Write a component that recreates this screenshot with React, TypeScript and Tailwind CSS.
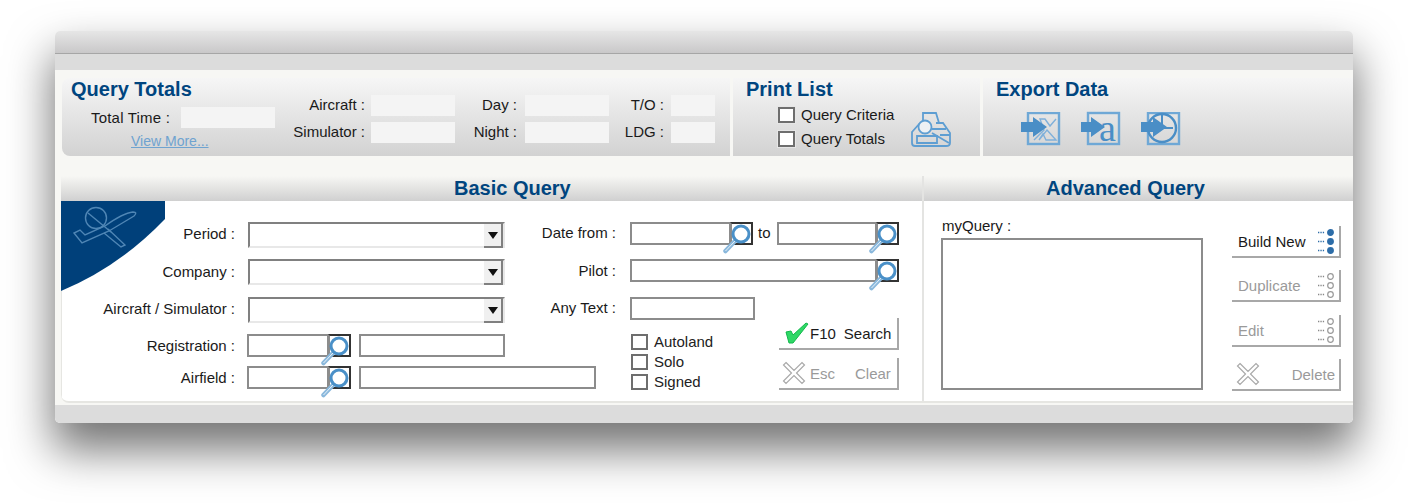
const Heading = ({ children }: { children: React.ReactNode }) => (
  <h2 className="text-[20px] leading-[22px] font-bold text-[#00457f]">{children}</h2>
);

const StatBox = () => <div className="h-[21px] bg-[#f4f4f4]" />;

const StatLabel = ({ text, pad }: { text: string; pad: string }) => (
  <span className={`h-[21px] text-right leading-[19px] whitespace-nowrap ${pad}`}>{text}</span>
);

const Check = ({ label, light }: { label: string; light?: boolean }) => (
  <label className="flex items-center gap-[6px] h-[16px] whitespace-nowrap">
    <input
      type="checkbox"
      className={`appearance-none w-[17px] h-[16px] bg-white border-2 border-[#6e6e6e] ${light ? "" : "outline-1 outline-[#e6e6e6]"}`}
    />
    <span className={light ? "text-[#222]" : ""}>{label}</span>
  </label>
);

const LookupIcon = () => (
  <svg className="absolute -left-[9px] top-0 pointer-events-none" width="30" height="30" viewBox="0 0 30 30" fill="none">
    <path d="M12 17 L2.5 27" stroke="#8ab8dc" strokeWidth="4.5" strokeLinecap="round" />
    <path d="M12 17 L2.5 27" stroke="#e8f2fa" strokeWidth="1" />
    <circle cx="18" cy="10" r="8" fill="#fff" stroke="#4a90c8" strokeWidth="3" />
  </svg>
);

const LookupInput = ({ width }: { width: string }) => (
  <div className={`relative flex h-[23px] ${width}`}>
    <input className="flex-1 min-w-0 border-2 border-[#8c8c8c] bg-white" />
    <div className="relative w-[23px] shrink-0 -ml-[1px] border-2 border-[#8c8c8c] border-r-[#333] border-t-[#333] border-b-[#333] bg-white">
      <LookupIcon />
    </div>
  </div>
);

const SelectBox = () => (
  <div className="relative w-[257px] h-[26px]">
    <select className="appearance-none block w-full h-full bg-white border-2 border-t-[#808080] border-l-[#808080] border-r-[#e8e8e8] border-b-[#e8e8e8]" />
    <div className="absolute right-[2px] top-[2px] bottom-[0px] w-[19px] flex items-center justify-center bg-[#f0f0f0] border-r-2 border-b-2 border-[#808080]">
      <svg width="10" height="7" viewBox="0 0 10 7">
        <path d="M0 0H10L5 7Z" fill="#111" />
      </svg>
    </div>
  </div>
);

const CrossIcon = () => (
  <svg width="24" height="24" viewBox="0 0 24 24" fill="#fff" stroke="#a9a9a9" strokeWidth="1.2">
    <path d="M4 1.5 L12 9.5 L20 1.5 L22.5 4 L14.5 12 L22.5 20 L20 22.5 L12 14.5 L4 22.5 L1.5 20 L9.5 12 L1.5 4 Z" />
  </svg>
);

const DotsIcon = ({ active }: { active?: boolean }) => (
  <svg width="17" height="25" viewBox="0 0 17 25">
    {[3.5, 12.5, 21.5].map((y) => (
      <g key={y}>
        <path d={`M0 ${y}h1.3M2.4 ${y}h1.3M4.8 ${y}h1.3`} stroke={active ? "#2d6da8" : "#888"} strokeWidth="1.4" />
        <circle
          cx="12.5"
          cy={y}
          r="2.8"
          fill={active ? "#2d6da8" : "#fff"}
          stroke={active ? "#2d6da8" : "#999"}
          strokeWidth="1.2"
        />
      </g>
    ))}
  </svg>
);

const ActionButton = ({ children, mt }: { children: React.ReactNode; mt: string }) => (
  <button className={`flex items-center justify-between w-[109px] h-[32px] pl-[6px] pr-[4px] bg-white border-r-2 border-b-2 border-[#a8a8a8] ${mt}`}>
    {children}
  </button>
);

const ExportArrow = ({ shift }: { shift?: number }) => (
  <path d={`M0 10 H${12 + (shift ?? 0)} V5 L${26 + (shift ?? 0)} 15 L${12 + (shift ?? 0)} 25 V20 H0 Z`} fill="#4a8ec6" />
);

const ExportExcel = () => (
  <svg width="40" height="34" viewBox="0 0 40 34" fill="none">
    <rect x="7" y="1" width="31" height="31" stroke="#6fa8d6" strokeWidth="2.4" />
    <path d="M13 28 L23 18 L19 7 H24 L29 14 L35 7 M26 18 L35 28 H25 L22 22 L18 28 Z" stroke="#7fb0da" strokeWidth="1.4" />
    <ExportArrow />
  </svg>
);

const ExportWord = () => (
  <svg width="40" height="34" viewBox="0 0 40 34" fill="none" className="overflow-visible">
    <rect x="7" y="1" width="31" height="31" stroke="#6fa8d6" strokeWidth="2.4" />
    <text x="18" y="29" fontFamily="Liberation Serif, serif" fontSize="38" fill="#4a8ec6">a</text>
    <ExportArrow shift={-2} />
  </svg>
);

const ExportClock = () => (
  <svg width="40" height="34" viewBox="0 0 40 34" fill="none">
    <rect x="7" y="1" width="31" height="31" stroke="#6fa8d6" strokeWidth="2.4" />
    <circle cx="21" cy="16" r="14" stroke="#4a8ec6" strokeWidth="2.4" />
    <path d="M21 2 V16 H32" stroke="#4a8ec6" strokeWidth="2" />
    <ExportArrow />
  </svg>
);

const PrinterIcon = () => (
  <svg width="42" height="38" viewBox="0 0 42 38" fill="none" stroke="#5e9ed2" strokeWidth="1.8">
    <path d="M13 11 V3 H26 L29 13" />
    <path d="M10 13 L2 22 V33 Q2 36 5 36 H36 Q40 36 40 33 V23 L33 13 H26" />
    <circle cx="15" cy="17" r="6.5" fill="#eef1f4" />
    <path d="M7 26 H27 V33 H7 Z" />
    <path d="M22 19 H36 M22 23 L39 33 M30 25 L40 25" />
  </svg>
);

export default function App() {
  return (
    <div className="w-[1408px] h-[503px] overflow-hidden bg-white pt-[31px] pl-[55px] font-['Liberation_Sans',sans-serif] text-[15px] leading-[18px] text-[#1a1a1a]">
      <div className="flex flex-col w-[1298px] h-[392px] rounded-[5px] overflow-hidden shadow-[0_25px_45px_2px_rgba(0,0,0,0.55)]">
        <div className="h-[23px] shrink-0 bg-linear-to-b from-[#e6e6e6] to-[#c9c8c9] border-b border-[#a6a6a6]" />
        <div className="h-[16px] shrink-0 bg-[#dcdcdc]" />

        <div className="h-[335px] shrink-0 bg-[#f7f7f4] pl-[6px] pt-[8px]">
          {/* totals strip */}
          <div className="flex ml-[1px] h-[78px] gap-[3px]">
            <div className="flex w-[668px] rounded-l-[8px] bg-linear-to-b from-[#f6f6f6] to-[#d2d2d2] pl-[9px]">
              <div className="w-[209px]">
                <Heading>Query Totals</Heading>
                <div className="flex mt-[7px]">
                  <span className="ml-[20px] w-[90px] leading-[21px] whitespace-nowrap tracking-[0.2px]">Total Time :</span>
                  <div className="w-[94px] h-[21px] bg-[#f4f4f4]" />
                </div>
                <a className="block mt-[5px] ml-[60px] text-[14px] leading-[16px] text-[#6fa3d0] underline whitespace-nowrap">View More...</a>
              </div>
              <div className="grid grid-cols-[91px_84px_70px_84px_62px_44px] gap-y-[6px] h-fit pt-[17px]">
                <StatLabel text="Aircraft :" pad="pr-[6px]" />
                <StatBox />
                <StatLabel text="Day :" pad="pr-[8px]" />
                <StatBox />
                <StatLabel text="T/O :" pad="pr-[7px]" />
                <StatBox />
                <StatLabel text="Simulator :" pad="pr-[6px]" />
                <StatBox />
                <StatLabel text="Night :" pad="pr-[8px]" />
                <StatBox />
                <StatLabel text="LDG :" pad="pr-[7px]" />
                <StatBox />
              </div>
            </div>

            <div className="w-[247px] bg-linear-to-b from-[#f6f6f6] to-[#d2d2d2] pl-[13px]">
              <Heading>Print List</Heading>
              <div className="flex">
                <div className="flex flex-col gap-[8px] ml-[32px] mt-[7px]">
                  <Check label="Query Criteria" />
                  <Check label="Query Totals" />
                </div>
                <div className="ml-[16px] mt-[10px]">
                  <PrinterIcon />
                </div>
              </div>
            </div>

            <div className="flex-1 bg-linear-to-b from-[#f6f6f6] to-[#d2d2d2] pl-[13px]">
              <Heading>Export Data</Heading>
              <div className="flex gap-[20px] ml-[25px] mt-[12px]">
                <ExportExcel />
                <ExportWord />
                <ExportClock />
              </div>
            </div>
          </div>

          {/* query panel */}
          <div className="flex mt-[20px] h-[227px] rounded-bl-[8px] border-b-2 border-[#e6e6e2] overflow-hidden">
            <section className="relative w-[861px] shrink-0 flex flex-col">
              <div className="h-[25px] shrink-0 pl-[393px] bg-linear-to-b from-[#f7f7f4] to-[#d0d0d0] text-[20px] leading-[24px] font-bold text-[#00457f]">
                Basic Query
              </div>
              <div className="relative flex-1 bg-white pt-[21px] shadow-[inset_1px_0_0_#e6e6e2]">
                <svg className="absolute left-0 top-0" width="104" height="91" viewBox="0 0 104 91" fill="none">
                  <path d="M0 0H104V18Q58 66 0 90Z" fill="#00407a" />
                  <g stroke="#4f86b5" strokeWidth="1.4">
                    <circle cx="35" cy="17" r="10.5" />
                    <path d="M27 12 L50 31" />
                    <path d="M13 32 L21 42 L48 30 L73 15 Q77 11 72 11 Q62 12 44 25 L24 34 L19 29 Z" />
                    <path d="M47 28 L64 44 L60 46 L43 32" />
                  </g>
                </svg>

                <div className="relative flex flex-col">
                  <div className="flex items-start h-[37px]">
                    <span className="w-[174px] text-right leading-[24px]">Period :</span>
                    <div className="ml-[13px]"><SelectBox /></div>
                    <span className="w-[111px] text-right leading-[22px]">Date from :</span>
                    <div className="ml-[14px]"><LookupInput width="w-[123px]" /></div>
                    <span className="ml-[5px] w-[19px] leading-[22px]">to</span>
                    <LookupInput width="w-[122px]" />
                  </div>
                  <div className="flex items-start h-[38px]">
                    <span className="w-[174px] text-right leading-[26px]">Company :</span>
                    <div className="ml-[13px]"><SelectBox /></div>
                    <span className="w-[111px] text-right leading-[24px]">Pilot :</span>
                    <div className="ml-[14px]"><LookupInput width="w-[269px]" /></div>
                  </div>
                  <div className="flex items-start h-[37px]">
                    <span className="w-[174px] text-right leading-[24px] whitespace-nowrap">Aircraft / Simulator :</span>
                    <div className="ml-[13px]"><SelectBox /></div>
                    <span className="w-[111px] text-right leading-[22px]">Any Text :</span>
                    <input className="ml-[14px] w-[125px] h-[23px] border-2 border-[#8c8c8c] bg-white" />
                  </div>
                </div>

                <div className="flex">
                  <div className="flex flex-col gap-[9px] w-[535px]">
                    <div className="flex items-start">
                      <span className="w-[174px] text-right leading-[23px]">Registration :</span>
                      <div className="ml-[12px]"><LookupInput width="w-[104px]" /></div>
                      <input className="ml-[8px] w-[146px] h-[23px] border-2 border-[#8c8c8c] bg-white" />
                    </div>
                    <div className="flex items-start">
                      <span className="w-[174px] text-right leading-[23px]">Airfield :</span>
                      <div className="ml-[12px]"><LookupInput width="w-[104px]" /></div>
                      <input className="ml-[8px] w-[237px] h-[23px] border-2 border-[#8c8c8c] bg-white" />
                    </div>
                  </div>
                  <div className="flex flex-col gap-[4px] ml-[35px] w-[148px]">
                    <Check label="Autoland" light />
                    <Check label="Solo" light />
                    <Check label="Signed" light />
                  </div>
                  <div className="flex flex-col gap-[8px] -mt-[16px] relative">
                    <button className="flex items-center w-[120px] h-[32px] pl-[5px] border-r-2 border-b-2 border-[#a8a8a8] bg-white whitespace-nowrap">
                      <svg width="25" height="22" viewBox="0 0 25 22">
                        <path d="M2 10 L7 9 L9 13 L22 1 L24 2 L9 21 L5 21 Z" fill="#2fd866" stroke="#12b84c" strokeWidth="1" />
                      </svg>
                      <span className="ml-[1px] mt-[2px]">F10</span>
                      <span className="ml-[8px] mt-[2px]">Search</span>
                    </button>
                    <button className="flex items-center w-[120px] h-[32px] pl-[3px] border-r-2 border-b-2 border-[#a8a8a8] bg-white text-[#9a9a9a] whitespace-nowrap">
                      <CrossIcon />
                      <span className="ml-[4px] mt-[2px]">Esc</span>
                      <span className="ml-[20px] mt-[2px]">Clear</span>
                    </button>
                  </div>
                </div>
              </div>
            </section>

            <section className="flex-1 flex flex-col border-l-2 border-[#e4e4e2]">
              <div className="h-[25px] shrink-0 pl-[122px] bg-linear-to-b from-[#f7f7f4] to-[#d0d0d0] text-[20px] leading-[24px] font-bold text-[#00457f]">
                Advanced Query
              </div>
              <div className="flex flex-1 bg-white pl-[17px]">
                <div className="w-[262px] pt-[16px]">
                  <div className="leading-[18px] ml-[1px]">myQuery :</div>
                  <textarea className="block mt-[3px] w-[262px] h-[152px] resize-none border-2 border-[#8c8c8c] bg-white" />
                </div>
                <div className="flex flex-col ml-[29px] pt-[25px]">
                  <ActionButton mt="">
                    <span className="mt-[2px]">Build New</span>
                    <DotsIcon active />
                  </ActionButton>
                  <ActionButton mt="mt-[12px]">
                    <span className="mt-[2px] text-[#9a9a9a]">Duplicate</span>
                    <DotsIcon />
                  </ActionButton>
                  <ActionButton mt="mt-[13px]">
                    <span className="mt-[2px] text-[#9a9a9a]">Edit</span>
                    <DotsIcon />
                  </ActionButton>
                  <ActionButton mt="mt-[12px]">
                    <span className="-ml-[2px]"><CrossIcon /></span>
                    <span className="mt-[2px] text-[#9a9a9a]">Delete</span>
                  </ActionButton>
                </div>
              </div>
            </section>
          </div>
        </div>

        <div className="flex-1 bg-[#dcdcdc]" />
      </div>
    </div>
  );
}
